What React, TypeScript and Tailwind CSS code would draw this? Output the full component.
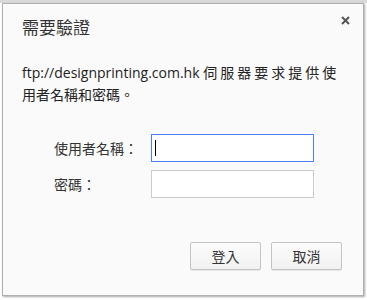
export default function App() {
  return (
    <div
      className="w-[367px] h-[300px] overflow-hidden bg-[linear-gradient(#d9d9d9_0_3px,#ffffff_3px)] pt-[3px] pl-[2px]"
      style={{ fontFamily: '"Open Sans", "Noto Sans CJK TC", sans-serif' }}
    >
      <div className="relative w-[362px] h-[293px] bg-[#fafafa] border border-[#b0b0b0] shadow-[1px_1px_2px_rgba(0,0,0,0.35)] flex flex-col">
        {/* close */}
        <button className="absolute right-[12px] top-[11px] w-[11px] h-[11px] flex items-center justify-center">
          <svg width="9" height="9" viewBox="0 0 9 9">
            <path d="M1 1 L8 8 M8 1 L1 8" stroke="#555" strokeWidth="2" />
          </svg>
        </button>

        <div className="pl-[19px] pt-[12px] text-[17px] leading-[24px] text-[#333]">需要驗證</div>

        <div className="pl-[19px] pt-[22px] text-[14px] leading-[22px] text-[#222] whitespace-nowrap">
          ftp://designprinting.com.hk <span className="tracking-[3px]">伺服器要求提供使</span>
          <br />
          用者名稱和密碼。
        </div>

        <div className="pt-[28px] grid grid-cols-[97px_163px] gap-y-[8px] pl-[51px] items-center text-[14px] text-[#333]">
          <label>使用者名稱：</label>
          <div className="h-[28px] bg-white border border-[#4d7ef5] flex items-center pl-[3px]">
            <div className="w-[1px] h-[16px] bg-black" />
          </div>
          <label>密碼：</label>
          <div className="h-[28px] bg-white border border-[#cccccc]" />
        </div>

        <div className="mt-auto mb-[25px] mr-[21px] flex justify-end gap-[10px] text-[14px] text-[#333]">
          <button className="w-[71px] h-[28px] border border-[#c3c3c3] rounded-[2px] bg-[linear-gradient(#fcfcfc,#f1f1f1)] shadow-[0_1px_0_rgba(0,0,0,0.08)]">
            登入
          </button>
          <button className="w-[71px] h-[28px] border border-[#c3c3c3] rounded-[2px] bg-[linear-gradient(#fcfcfc,#f1f1f1)] shadow-[0_1px_0_rgba(0,0,0,0.08)]">
            取消
          </button>
        </div>
      </div>
    </div>
  );
}
